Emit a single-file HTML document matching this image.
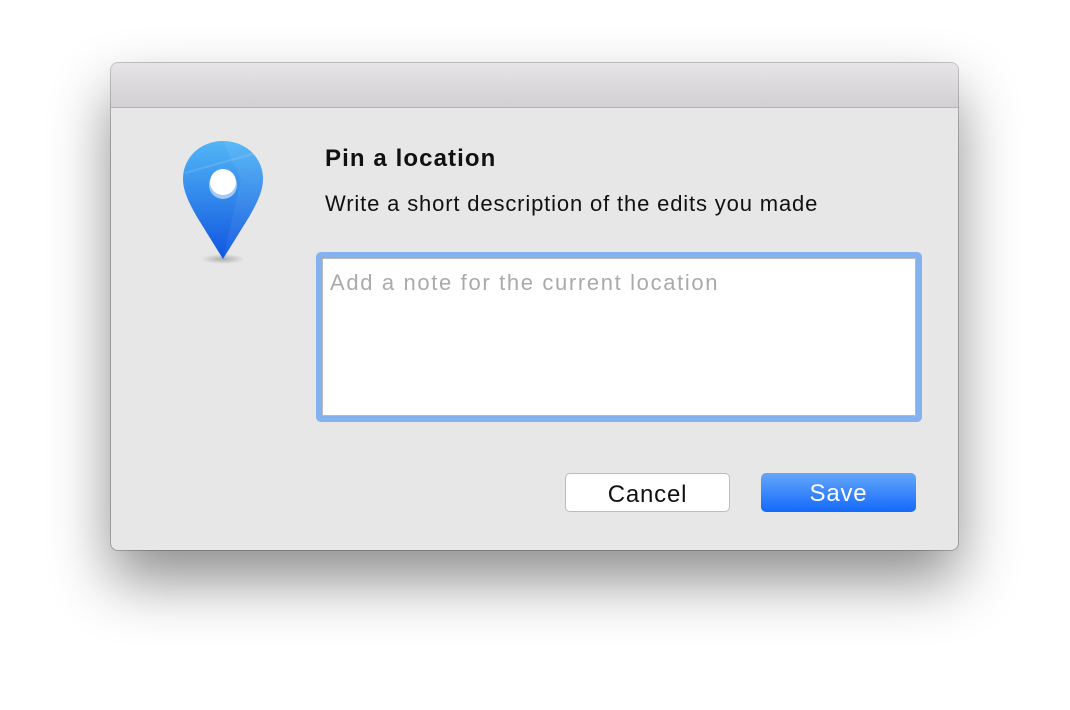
<!DOCTYPE html>
<html><head><meta charset="utf-8"><style>
html,body{margin:0;padding:0;width:1070px;height:710px;background:#fff;overflow:hidden;font-family:"Liberation Sans",sans-serif;}
.win{position:absolute;left:111px;top:63px;width:847px;height:487px;border-radius:7px;background:#e7e7e7;
box-shadow:0 30px 60px rgba(0,0,0,0.45),0 0 0 1px rgba(0,0,0,0.22);overflow:hidden;}
.tb{height:44px;background:linear-gradient(#e6e4e6,#d2d0d2);border-bottom:1px solid #b4b2b4;}
.title{position:absolute;left:214px;top:82px;font-weight:bold;font-size:24px;letter-spacing:1.1px;color:#111;}
.desc{position:absolute;left:214px;top:128px;font-size:22px;letter-spacing:0.85px;color:#111;}
.ta{position:absolute;left:205px;top:189px;width:594px;height:158px;border:6px solid #84b2ee;border-radius:5px;}
.ta .in{position:absolute;left:0;top:0;right:0;bottom:0;background:#fff;border:1px solid #b9b9b9;}
.ph{position:absolute;left:7px;top:11px;font-size:22px;letter-spacing:1.65px;color:#aaa;}
.btn{position:absolute;top:410px;height:38px;border-radius:5px;font-size:24px;letter-spacing:0.8px;text-align:center;line-height:41px;}
.cancel{left:454px;width:163px;background:#fff;border:1px solid #bcbcbc;height:37px;color:#111;}
.save{left:650px;width:155px;background:linear-gradient(#65a7fb,#1369fb);color:#fff;height:39px;}
</style></head><body>
<div class="win">
<div class="tb"></div>
<svg style="position:absolute;left:70px;top:76px" width="84" height="126" viewBox="0 0 84 126">
<defs><linearGradient id="g" x1="0" y1="0" x2="0" y2="1"><stop offset="0" stop-color="#52b6f6"/><stop offset="1" stop-color="#0f55e0"/></linearGradient>
<radialGradient id="sh"><stop offset="0" stop-color="rgba(0,0,0,0.25)"/><stop offset="1" stop-color="rgba(0,0,0,0)"/></radialGradient></defs>
<ellipse cx="42" cy="120" rx="22" ry="5" fill="url(#sh)"/>
<path d="M42 2C20 2 2 18 2 40C2 52 8 64 16 78L42 120L68 78C76 64 82 52 82 40C82 18 64 2 42 2Z" fill="url(#g)"/>
<path d="M42 2C62 2 82 18 82 40C82 52 76 64 68 78L42 120L60 40Z" fill="rgba(255,255,255,0.06)"/>
<path d="M4 34L75 14" stroke="rgba(255,255,255,0.12)" stroke-width="2"/>
<circle cx="42" cy="46" r="14" fill="#a5c9f5"/>
<circle cx="42" cy="43" r="13" fill="#fff"/>
</svg>
<div class="title">Pin a location</div>
<div class="desc">Write a short description of the edits you made</div>
<div class="ta"><div class="in"><div class="ph">Add a note for the current location</div></div></div>
<div class="btn cancel">Cancel</div>
<div class="btn save">Save</div>
</div>
</body></html>
